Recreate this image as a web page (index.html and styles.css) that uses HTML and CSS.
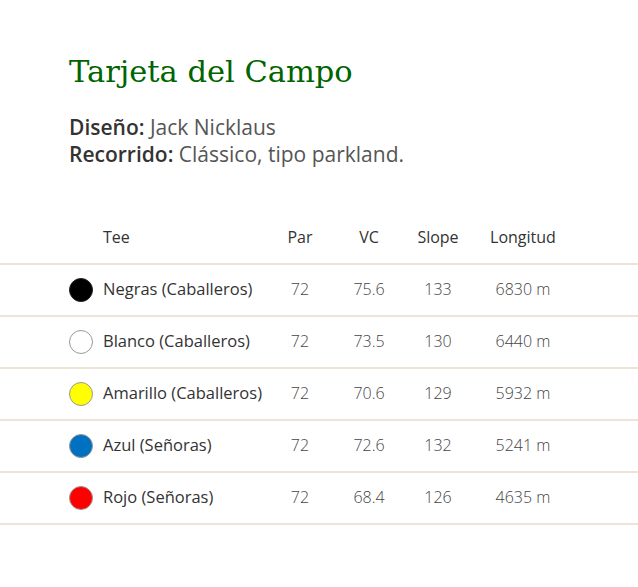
FILE: index.html
```html
<!DOCTYPE html>
<html lang="es">
<head>
<meta charset="utf-8">
<link rel="stylesheet" href="styles.css">
</head>
<body>
<div class="intro">
  <h1 class="title">Tarjeta del Campo</h1>
  <p class="meta"><strong>Diseño:</strong> Jack Nicklaus<br><strong>Recorrido:</strong> Clássico, tipo parkland.</p>
</div>
<div class="card">
  <div class="row head">
    <div class="tee">Tee</div>
    <div class="num">Par</div>
    <div class="num">VC</div>
    <div class="num">Slope</div>
    <div class="num">Longitud</div>
  </div>
  <div class="row">
    <div class="tee"><span class="dot black"></span>Negras (Caballeros)</div>
    <div class="num">72</div><div class="num">75.6</div><div class="num">133</div><div class="num">6830 m</div>
  </div>
  <div class="row">
    <div class="tee"><span class="dot white"></span>Blanco (Caballeros)</div>
    <div class="num">72</div><div class="num">73.5</div><div class="num">130</div><div class="num">6440 m</div>
  </div>
  <div class="row">
    <div class="tee"><span class="dot yellow"></span>Amarillo (Caballeros)</div>
    <div class="num">72</div><div class="num">70.6</div><div class="num">129</div><div class="num">5932 m</div>
  </div>
  <div class="row">
    <div class="tee"><span class="dot blue"></span>Azul (Señoras)</div>
    <div class="num">72</div><div class="num">72.6</div><div class="num">132</div><div class="num">5241 m</div>
  </div>
  <div class="row">
    <div class="tee"><span class="dot red"></span>Rojo (Señoras)</div>
    <div class="num">72</div><div class="num">68.4</div><div class="num">126</div><div class="num">4635 m</div>
  </div>
</div>
</body>
</html>
```
FILE: styles.css
```css
html, body {
  margin: 0;
  padding: 0;
  background: #fff;
}
body {
  font-family: "Open Sans", sans-serif;
  color: #333;
}
.intro {
  padding: 52px 69px 0 69px;
}
.title {
  margin: 0;
  font-family: "DejaVu Serif", serif;
  font-weight: normal;
  font-size: 30.5px;
  line-height: 40px;
  color: #006400;
}
.meta {
  margin: 22px 0 0 0;
  font-size: 21px;
  line-height: 27px;
  font-weight: 400;
  color: #555;
}
.meta strong {
  font-weight: 600;
  color: #333;
}
.card {
  margin-top: 45px;
}
.row {
  display: grid;
  grid-template-columns: 272px 56px 82px 56px 114px 1fr;
  align-items: center;
  box-sizing: border-box;
  height: 52px;
  padding-bottom: 3px;
  border-bottom: 2px solid #ede4d8;
  font-size: 16px;
}
.tee {
  display: flex;
  align-items: center;
  padding-left: 103px;
  position: relative;
  white-space: nowrap;
  font-size: 16.5px;
  font-weight: 500;
  color: #333;
}
.row .num {
  text-align: center;
  font-weight: 300;
  color: #444;
}
.row.head .num {
  font-size: 16px;
  font-weight: 500;
  color: #333;
}
.row.head .tee {
  font-size: 16px;
}
.dot {
  position: absolute;
  left: 69px;
  top: 50%;
  margin-top: -10.5px;
  width: 22px;
  height: 22px;
  border-radius: 50%;
  border: 1px solid #999;
}
.black { background: #000; border-color: #222; }
.white { background: #fff; }
.yellow { background: #ffff00; }
.blue { background: #0070c0; }
.red { background: #ff0000; }
```
